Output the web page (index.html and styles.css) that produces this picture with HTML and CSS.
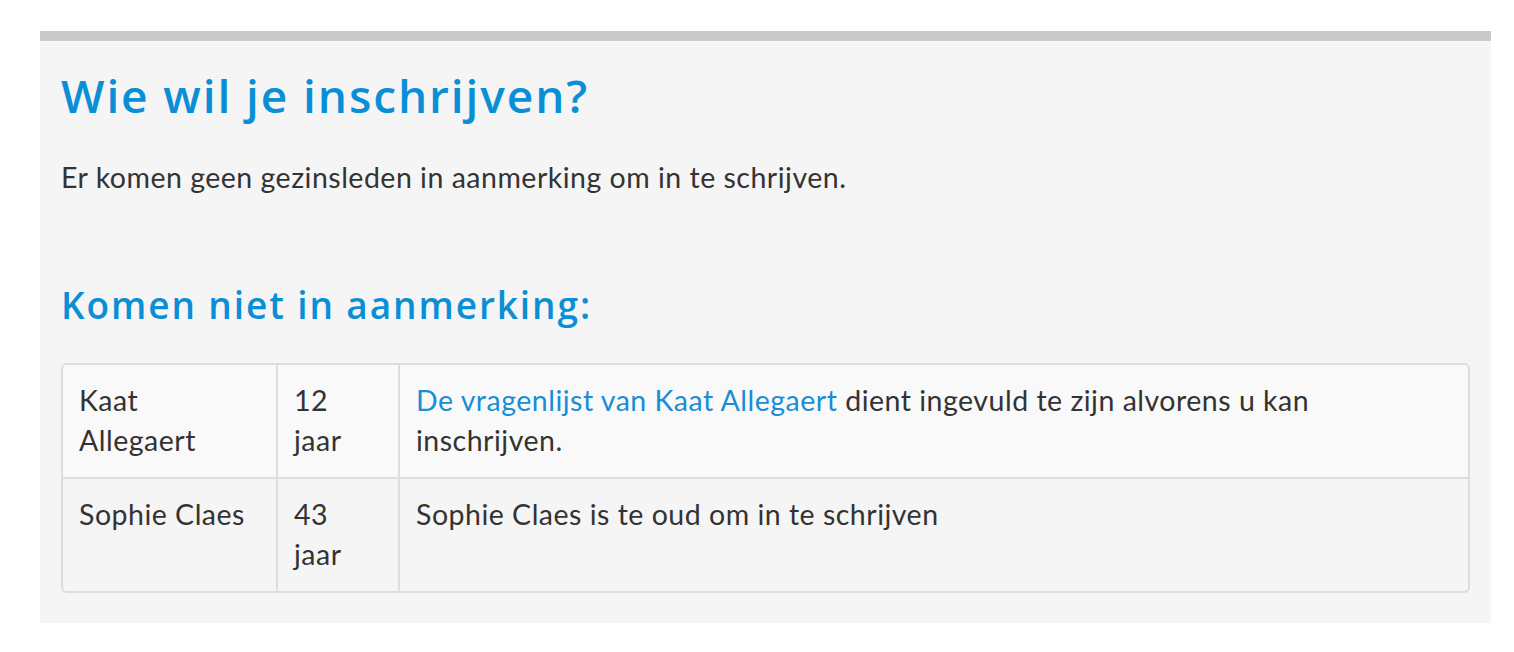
FILE: index.html
```html
<!DOCTYPE html>
<html lang="nl">
<head>
<meta charset="utf-8">
<title>Inschrijven</title>
<link rel="stylesheet" href="styles.css">
</head>
<body>
<section class="panel">
  <h1 class="title">Wie wil je inschrijven?</h1>
  <p class="intro">Er komen geen gezinsleden in aanmerking om in te schrijven.</p>
  <h2 class="subtitle">Komen niet in aanmerking:</h2>
  <div class="table-wrap">
    <table class="members">
      <tbody>
        <tr class="odd">
          <td class="c-name">Kaat<br>Allegaert</td>
          <td class="c-age">12<br>jaar</td>
          <td class="c-reason"><a href="#" class="link">De vragenlijst van Kaat Allegaert</a> dient ingevuld te zijn alvorens u kan<br>inschrijven.</td>
        </tr>
        <tr>
          <td class="c-name">Sophie Claes</td>
          <td class="c-age">43<br>jaar</td>
          <td class="c-reason">Sophie Claes is te oud om in te schrijven</td>
        </tr>
      </tbody>
    </table>
  </div>
</section>
</body>
</html>
```
FILE: styles.css
```css
html, body {
  margin: 0;
  padding: 0;
  background: #ffffff;
}
body {
  font-family: Lato, "Open Sans", sans-serif;
  color: #333333;
}
.panel {
  margin: 31px 23px 0 40px;
  border-top: 10px solid #cacaca;
  background: #f5f5f5;
  padding: 26px 21px 30px 21px;
}
.title {
  margin: 0;
  font-family: "Open Sans", sans-serif;
  font-weight: 600;
  font-size: 46px;
  line-height: 56px;
  letter-spacing: 1.9px;
  color: #0a8fd6;
}
.intro {
  margin: 34px 0 0 0;
  font-size: 28.5px;
  line-height: 40px;
  letter-spacing: 0.5px;
}
.subtitle {
  margin: 86px 0 0 0;
  font-family: "Open Sans", sans-serif;
  font-weight: 600;
  font-size: 37px;
  line-height: 44px;
  letter-spacing: 1.9px;
  color: #0a8fd6;
}
.table-wrap {
  margin-top: 36px;
  border: 2px solid #dddddd;
  border-radius: 6px;
  overflow: hidden;
}
.members {
  width: 100%;
  border-collapse: collapse;
  font-size: 28.5px;
  line-height: 40px;
  letter-spacing: 0.5px;
}
.members td {
  vertical-align: top;
  padding: 15px 16px 17px 16px;
  border-left: 2px solid #dddddd;
  border-top: 2px solid #dddddd;
}
.members tr:first-child td { border-top: none; }
.members td:first-child { border-left: none; }
.members tr.odd { background: #f9f9f9; }
.c-name { width: 181px; }
.c-age { width: 88px; }
.link {
  color: #1a8dd6;
  text-decoration: none;
}
```
